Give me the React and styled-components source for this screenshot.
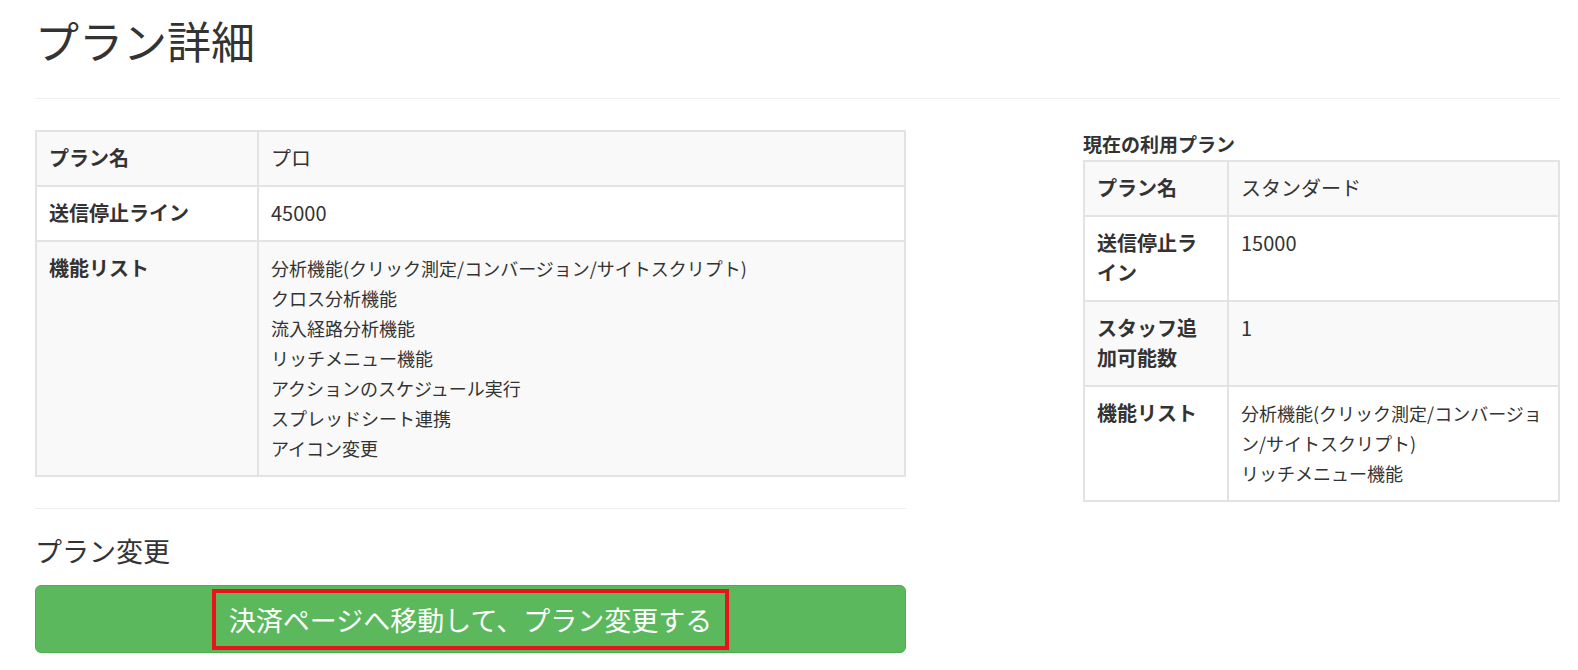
import React from "react";
import styled, { createGlobalStyle } from "styled-components";

const GlobalStyle = createGlobalStyle`
  body {
    margin: 0;
    background: #ffffff;
    color: #333333;
    font-family: "Noto Sans CJK JP", "Noto Sans", sans-serif;
  }
`;

const Page = styled.div`
  padding: 0 18px 0 35px;
`;

const Title = styled.h1`
  margin: 14px 0 0;
  font-size: 44px;
  font-weight: 400;
  line-height: 53px;
  color: #333333;
`;

const Rule = styled.hr`
  margin: ${(p) => p.$margin || "31px 0 0"};
  border: 0;
  border-top: 1px solid #eeeeee;
`;

const Columns = styled.div`
  display: flex;
  justify-content: space-between;
  align-items: flex-start;
  margin-top: 31px;
`;

const MainCol = styled.div`
  width: 871px;
`;

const SideCol = styled.div`
  width: 477px;
`;

const SideHeading = styled.h4`
  margin: 0 0 3px;
  font-size: 19px;
  font-weight: 700;
  line-height: 27px;
`;

const Table = styled.table`
  width: 100%;
  table-layout: fixed;
  border-collapse: collapse;
  border: 2px solid #e3e3e3;

  tr:nth-child(odd) {
    background: #f9f9f9;
  }
`;

const Label = styled.th`
  padding: 11px 12px 12px;
  border: 2px solid #e3e3e3;
  text-align: left;
  vertical-align: top;
  font-size: 20px;
  font-weight: 700;
  line-height: 30px;
`;

const Value = styled.td`
  padding: 11px 12px 12px;
  border: 2px solid #e3e3e3;
  vertical-align: top;
  font-size: 20px;
  line-height: 30px;
`;

const FeatureList = styled.div`
  font-size: 18px;
  line-height: 30px;
`;

const SubHeading = styled.h3`
  margin: 22px 0 0;
  font-size: 27px;
  font-weight: 400;
  line-height: 40px;
`;

const ChangeButton = styled.button`
  display: flex;
  justify-content: center;
  align-items: center;
  width: 100%;
  height: 68px;
  margin-top: 14px;
  padding: 0;
  border: 1px solid #4cae4c;
  border-radius: 6px;
  background: #5cb85c;
  color: #ffffff;
  font-family: inherit;
  cursor: pointer;
`;

const ButtonText = styled.span`
  display: inline-block;
  padding: 0 13px;
  border: 4px solid #e8141c;
  font-size: 27px;
  line-height: 53px;
`;

const proFeatures = [
  "分析機能(クリック測定/コンバージョン/サイトスクリプト)",
  "クロス分析機能",
  "流入経路分析機能",
  "リッチメニュー機能",
  "アクションのスケジュール実行",
  "スプレッドシート連携",
  "アイコン変更",
];

const currentFeatures = [
  "分析機能(クリック測定/コンバージョン/サイトスクリプト)",
  "リッチメニュー機能",
];

function Features({ items }) {
  return (
    <FeatureList>
      {items.map((item) => (
        <div key={item}>{item}</div>
      ))}
    </FeatureList>
  );
}

function PlanTable({ labelWidth, rows }) {
  return (
    <Table>
      <colgroup>
        <col style={{ width: labelWidth }} />
        <col />
      </colgroup>
      <tbody>
        {rows.map(([label, value]) => (
          <tr key={label}>
            <Label>{label}</Label>
            <Value>{value}</Value>
          </tr>
        ))}
      </tbody>
    </Table>
  );
}

export default function App() {
  return (
    <Page>
      <GlobalStyle />
      <Title>プラン詳細</Title>
      <Rule />
      <Columns>
        <MainCol>
          <PlanTable
            labelWidth="222px"
            rows={[
              ["プラン名", "プロ"],
              ["送信停止ライン", "45000"],
              ["機能リスト", <Features items={proFeatures} />],
            ]}
          />
          <Rule $margin="31px 0 0" />
          <SubHeading>プラン変更</SubHeading>
          <ChangeButton type="button">
            <ButtonText>決済ページへ移動して、プラン変更する</ButtonText>
          </ChangeButton>
        </MainCol>
        <SideCol>
          <SideHeading>現在の利用プラン</SideHeading>
          <PlanTable
            labelWidth="144px"
            rows={[
              ["プラン名", "スタンダード"],
              ["送信停止ライン", "15000"],
              ["スタッフ追加可能数", "1"],
              ["機能リスト", <Features items={currentFeatures} />],
            ]}
          />
        </SideCol>
      </Columns>
    </Page>
  );
}
